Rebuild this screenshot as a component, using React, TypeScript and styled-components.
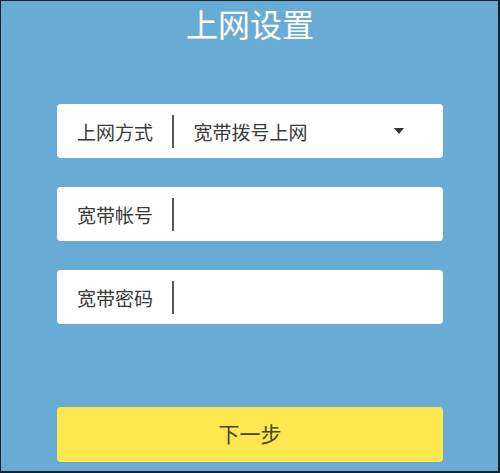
import React from "react";
import styled, { createGlobalStyle } from "styled-components";

const Global = createGlobalStyle`
  html, body { margin: 0; padding: 0; }
  body { font-family: "Noto Sans CJK SC", "Noto Sans", sans-serif; }
  * { box-sizing: border-box; }
`;

const Page = styled.div`
  width: 500px;
  height: 473px;
  background: #68acd6;
  border-style: solid;
  border-color: #17222c;
  border-width: 1px 2px 2px 1px;
  display: flex;
  flex-direction: column;
  padding: 0 55px 0 56px;
`;

const Title = styled.h1`
  margin: 3px 0 0;
  font-size: 32px;
  line-height: 38px;
  font-weight: 400;
  color: #ffffff;
  text-align: center;
`;

const Form = styled.div`
  display: flex;
  flex-direction: column;
  gap: 29px;
  margin-top: 62px;
`;

const Field = styled.div`
  height: 54px;
  background: #ffffff;
  border-radius: 4px;
  display: flex;
  align-items: center;
  padding: 0 19px 0 20px;
`;

const Label = styled.span`
  font-size: 19px;
  color: #3a3a3a;
  line-height: 1;
`;

const Divider = styled.span`
  width: 1.5px;
  height: 33px;
  background: #555555;
  margin: 0 20px 0 19px;
`;

const Value = styled.span`
  flex: 1;
  font-size: 19px;
  color: #3a3a3a;
  line-height: 1;
`;

const Caret = styled.span`
  width: 0;
  height: 0;
  border-left: 5px solid transparent;
  border-right: 5px solid transparent;
  border-top: 6px solid #333333;
  margin-right: 20px;
`;

const NextButton = styled.button`
  margin-top: 83px;
  height: 55px;
  background: #fde84f;
  border: none;
  border-radius: 4px;
  font-family: "Noto Sans CJK SC", sans-serif;
  font-size: 21px;
  line-height: 1;
  color: #4a4420;
  padding: 0 0 3px;
`;

export default function App() {
  return (
    <>
      <Global />
      <Page>
        <Title>上网设置</Title>
        <Form>
          <Field>
            <Label>上网方式</Label>
            <Divider />
            <Value>宽带拨号上网</Value>
            <Caret />
          </Field>
          <Field>
            <Label>宽带帐号</Label>
            <Divider />
            <Value />
          </Field>
          <Field>
            <Label>宽带密码</Label>
            <Divider />
            <Value />
          </Field>
        </Form>
        <NextButton>下一步</NextButton>
      </Page>
    </>
  );
}
